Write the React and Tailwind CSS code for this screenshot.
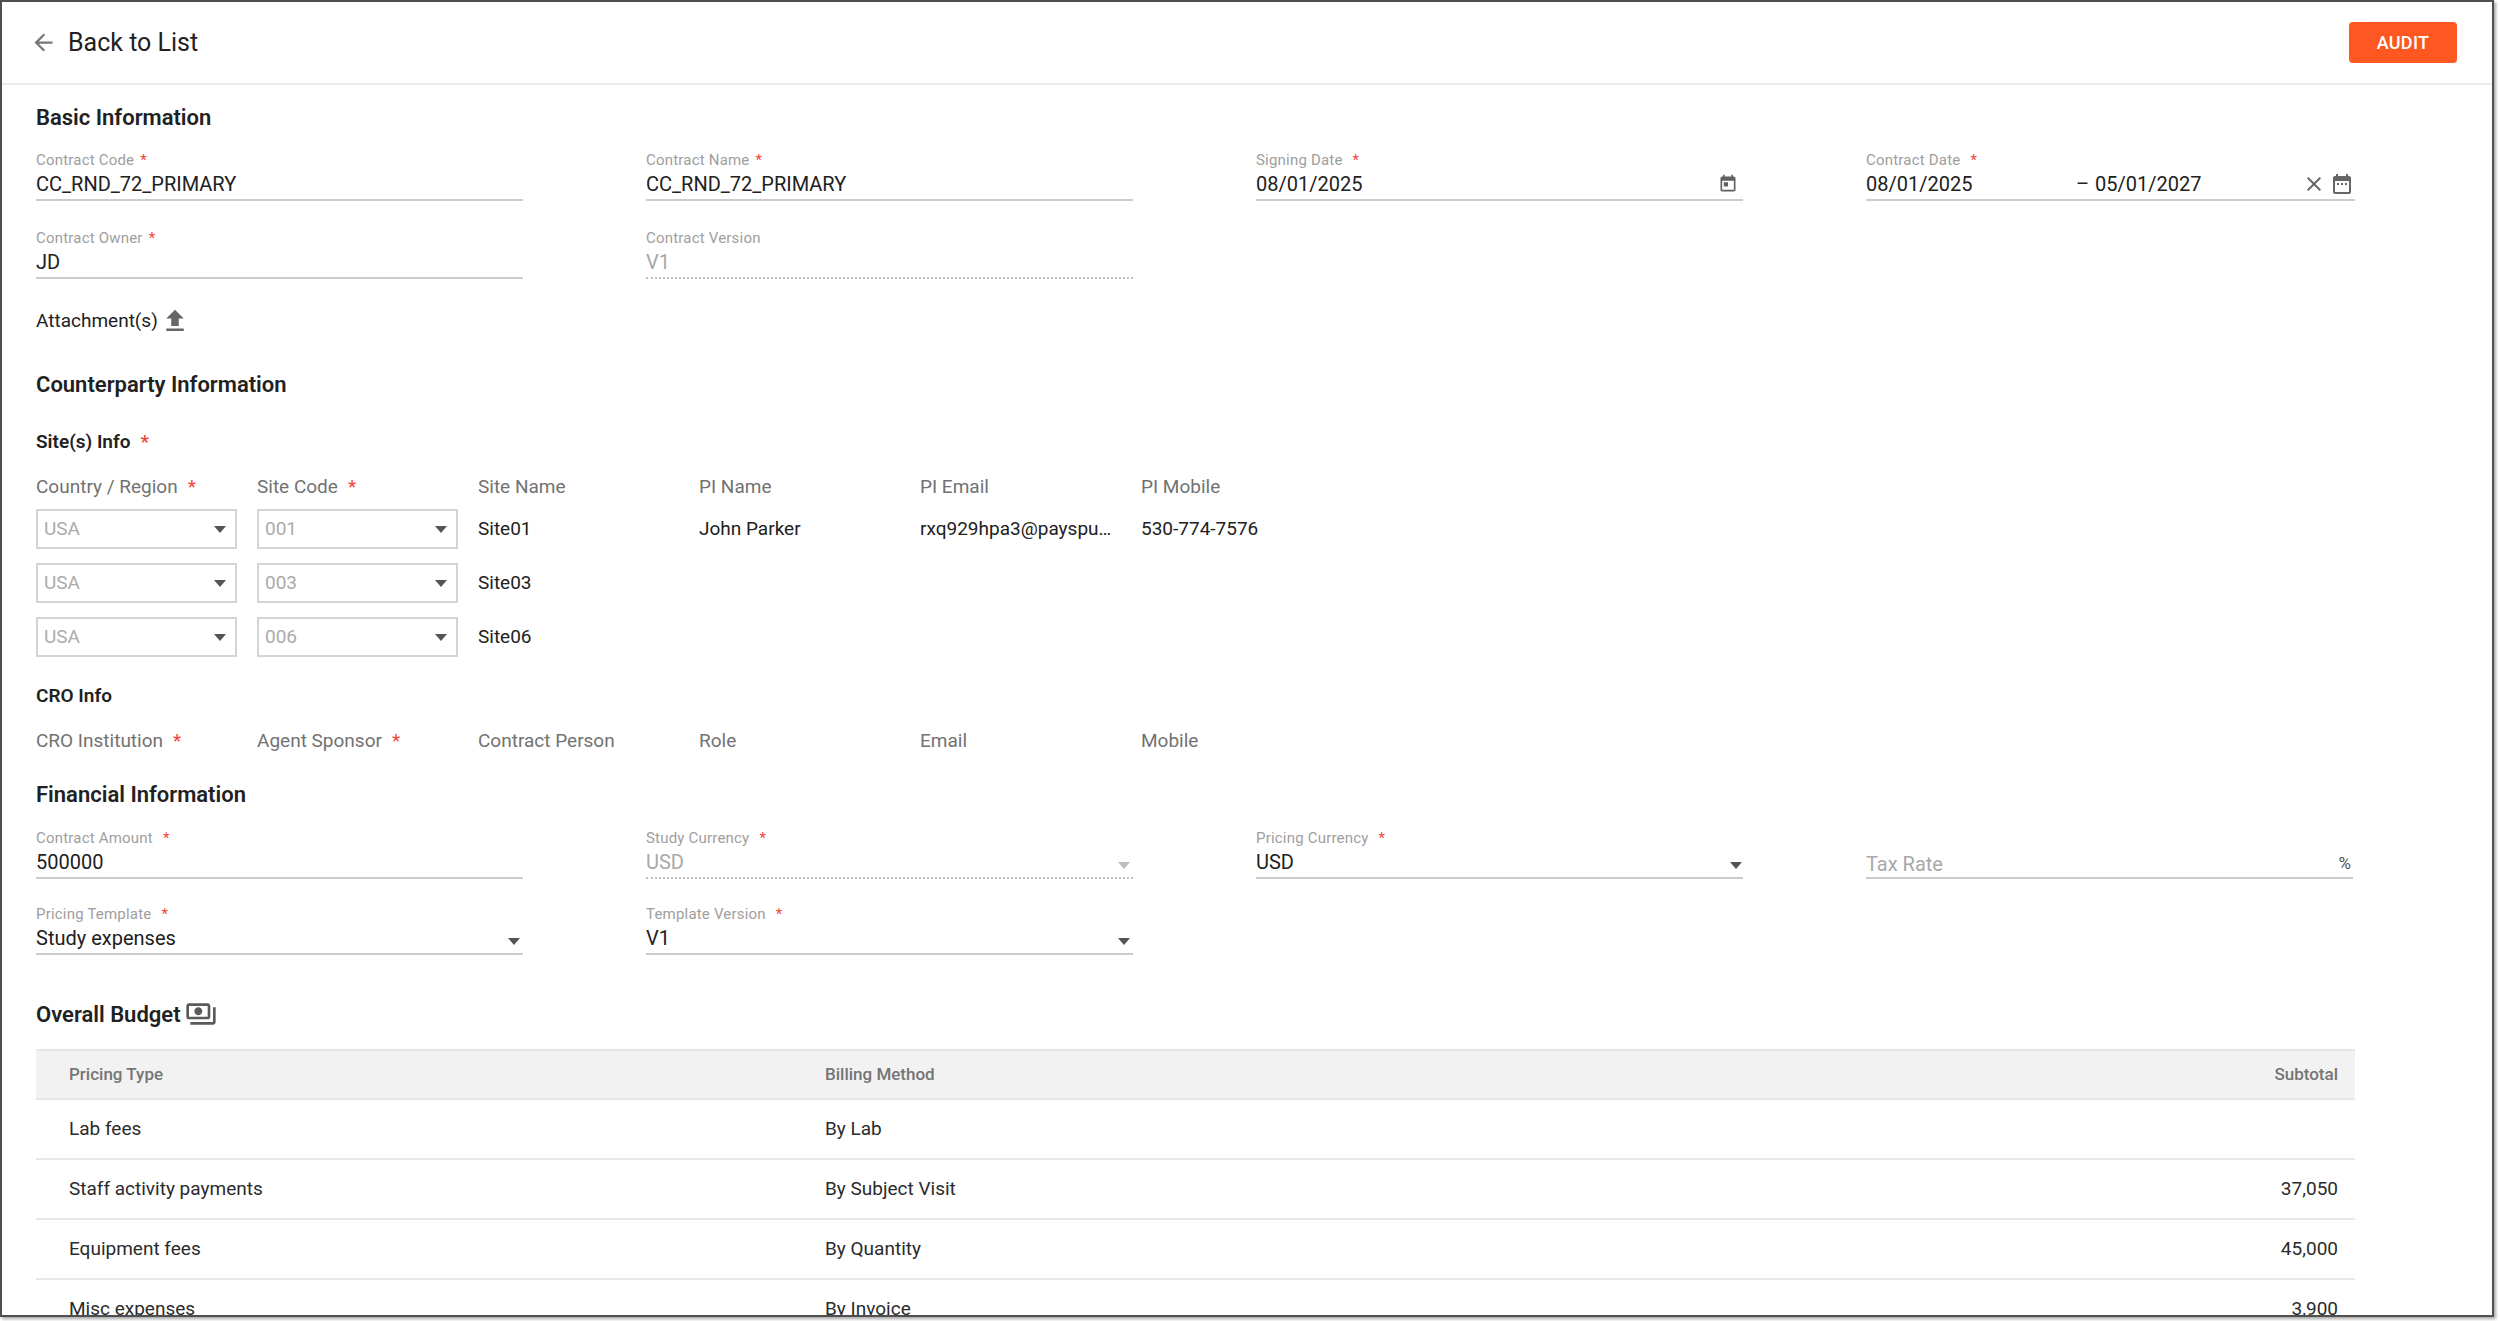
import React from "react";

const Star = ({ gap = "ml-[6px]" }) => (
  <span className={"text-[#f44336] " + gap}>*</span>
);

function ArrowDrop({ color = "border-t-[#555555]" }) {
  return (
    <span
      className={
        "inline-block w-0 h-0 border-l-[6px] border-r-[6px] border-t-[7px] border-l-transparent border-r-transparent " +
        color
      }
    />
  );
}

function Field({ label, star, starGap, value, disabled, placeholder, right }) {
  return (
    <div className="w-[487px]">
      <div className="h-[20px] leading-[20px] text-[15px] text-[#9e9e9e] tracking-[0.2px] whitespace-nowrap">
        {label}
        {star && <Star gap={starGap || "ml-[6px]"} />}
      </div>
      <div
        className={
          "h-[28px] flex items-center text-[20px] " +
          (placeholder ? "pt-[3px] " : "") +
          (disabled || placeholder ? "text-[#a8a8a8]" : "text-[#212121]")
        }
      >
        <span className="flex-1 whitespace-nowrap">{value}</span>
        {right}
      </div>
      <div
        className={
          "mt-[1px] border-b-2 " +
          (disabled ? "border-dotted border-[#bdbdbd]" : "border-solid border-[#cccccc]")
        }
      />
    </div>
  );
}

function TodayIcon() {
  return (
    <svg width="20" height="20" viewBox="0 0 24 24" fill="#616161" className="mr-[5px]">
      <path d="M19 3h-1V1h-2v2H8V1H6v2H5c-1.11 0-2 .9-2 2v14c0 1.1.89 2 2 2h14c1.1 0 2-.9 2-2V5c0-1.1-.9-2-2-2zm0 16H5V8h14v11zM7 10h5v5H7z" />
    </svg>
  );
}

function SelectBox({ value }) {
  return (
    <div className="w-[201px] h-[40px] border-2 border-[#d4d4d4] flex items-center pl-[6px] pr-[9px]">
      <span className="flex-1 text-[19px] text-[#ababab]">{value}</span>
      <ArrowDrop />
    </div>
  );
}

const siteRows = [
  { code: "001", name: "Site01", pi: "John Parker", email: "rxq929hpa3@payspu…", mobile: "530-774-7576" },
  { code: "003", name: "Site03", pi: "", email: "", mobile: "" },
  { code: "006", name: "Site06", pi: "", email: "", mobile: "" },
];

const tableRows = [
  ["Lab fees", "By Lab", ""],
  ["Staff activity payments", "By Subject Visit", "37,050"],
  ["Equipment fees", "By Quantity", "45,000"],
  ["Misc expenses", "By Invoice", "3,900"],
];

export default function App() {
  return (
    <div
      className="w-[2500px] h-[1321px] bg-white overflow-hidden"
      style={{ fontFamily: "Roboto, 'Liberation Sans', Arial, sans-serif" }}
    >
      <div className="w-[2494px] h-[1317px] border-2 border-[#4f4f4f] shadow-[2px_2px_3px_rgba(0,0,0,0.35)] overflow-hidden bg-white">
        {/* Header */}
        <div className="h-[83px] border-b-2 border-[#ebebeb] flex items-center pl-[28px] pr-[35px]">
          <svg width="27" height="27" viewBox="0 0 24 24" fill="#777777">
            <path d="M20 11H7.83l5.59-5.59L12 4l-8 8 8 8 1.41-1.41L7.83 13H20v-2z" />
          </svg>
          <span className="ml-[11px] text-[25px] text-[#212121] leading-none">Back to List</span>
          <div className="flex-1" />
          <button className="w-[108px] h-[41px] rounded-[4px] bg-[#ff5722] text-white text-[18px] font-medium tracking-[0.3px]">
            AUDIT
          </button>
        </div>

        <div className="pl-[34px]">
          {/* Basic Information */}
          <div className="mt-[19px] h-[28px] leading-[28px] text-[22px] font-semibold text-[#212121]">
            Basic Information
          </div>
          <div className="mt-[18px] grid grid-cols-[610px_610px_610px_610px]">
            <Field label="Contract Code" star value="CC_RND_72_PRIMARY" />
            <Field label="Contract Name" star value="CC_RND_72_PRIMARY" />
            <Field label="Signing Date" star starGap="ml-[10px]" value="08/01/2025" right={<TodayIcon />} />
            <div className="w-[489px]">
              <div className="h-[20px] leading-[20px] text-[15px] text-[#9e9e9e] tracking-[0.2px]">
                Contract Date
                <Star gap="ml-[10px]" />
              </div>
              <div className="h-[28px] flex items-center text-[20px] text-[#212121]">
                <span className="w-[210px]">08/01/2025</span>
                <span className="w-[19px]">–</span>
                <span className="flex-1">05/01/2027</span>
                <svg width="24" height="24" viewBox="0 0 24 24" fill="#666666" className="mr-[4px]">
                  <path d="M19 6.41L17.59 5 12 10.59 6.41 5 5 6.41 10.59 12 5 17.59 6.41 19 12 13.41 17.59 19 19 17.59 13.41 12z" />
                </svg>
                <svg width="24" height="24" viewBox="0 0 24 24" fill="#666666" className="mr-[1px]">
                  <path d="M9 11H7v2h2v-2zm4 0h-2v2h2v-2zm4 0h-2v2h2v-2zm2-7h-1V2h-2v2H8V2H6v2H5c-1.11 0-1.99.9-1.99 2L3 20c0 1.1.89 2 2 2h14c1.1 0 2-.9 2-2V6c0-1.1-.9-2-2-2zm0 16H5V9h14v11z" />
                </svg>
              </div>
              <div className="mt-[1px] border-b-2 border-[#cccccc]" />
            </div>
          </div>
          <div className="mt-[27px] grid grid-cols-[610px_610px_610px_610px]">
            <Field label="Contract Owner" star value="JD" />
            <Field label="Contract Version" value="V1" disabled />
          </div>

          <div className="mt-[28px] h-[28px] flex items-center text-[19px] text-[#212121]">
            <span>Attachment(s)</span>
            <svg width="30" height="30" viewBox="0 0 24 24" fill="#666666" className="ml-[2px]">
              <path d="M5 20h14v-2H5v2zm0-10h4v6h6v-6h4l-7-7-7 7z" />
            </svg>
          </div>

          {/* Counterparty */}
          <div className="mt-[36px] h-[28px] leading-[28px] text-[22px] font-semibold text-[#212121]">
            Counterparty Information
          </div>
          <div className="mt-[29px] h-[28px] leading-[28px] text-[19px] font-semibold text-[#212121]">
            Site(s) Info
            <Star gap="ml-[10px]" />
          </div>
          <div className="mt-[19px] h-[24px] grid grid-cols-[221px_221px_221px_221px_221px_221px] text-[19px] text-[#727272] leading-[24px]">
            <div>
              Country / Region
              <Star gap="ml-[10px]" />
            </div>
            <div>
              Site Code
              <Star gap="ml-[10px]" />
            </div>
            <div>Site Name</div>
            <div>PI Name</div>
            <div>PI Email</div>
            <div>PI Mobile</div>
          </div>
          <div className="mt-[10px] flex flex-col gap-[14px]">
            {siteRows.map((r) => (
              <div
                key={r.code}
                className="h-[40px] grid grid-cols-[221px_221px_221px_221px_221px_221px] items-center text-[19px] text-[#212121]"
              >
                <SelectBox value="USA" />
                <SelectBox value={r.code} />
                <div>{r.name}</div>
                <div>{r.pi}</div>
                <div className="whitespace-nowrap">{r.email}</div>
                <div>{r.mobile}</div>
              </div>
            ))}
          </div>

          {/* CRO */}
          <div className="mt-[25px] h-[28px] leading-[28px] text-[19px] font-semibold text-[#212121]">
            CRO Info
          </div>
          <div className="mt-[19px] h-[24px] grid grid-cols-[221px_221px_221px_221px_221px_221px] text-[19px] text-[#727272] leading-[24px]">
            <div>
              CRO Institution
              <Star gap="ml-[10px]" />
            </div>
            <div>
              Agent Sponsor
              <Star gap="ml-[10px]" />
            </div>
            <div>Contract Person</div>
            <div>Role</div>
            <div>Email</div>
            <div>Mobile</div>
          </div>

          {/* Financial */}
          <div className="mt-[28px] h-[28px] leading-[28px] text-[22px] font-semibold text-[#212121]">
            Financial Information
          </div>
          <div className="mt-[19px] grid grid-cols-[610px_610px_610px_610px]">
            <Field label="Contract Amount" star starGap="ml-[10px]" value="500000" />
            <Field
              label="Study Currency"
              star
              starGap="ml-[10px]"
              value="USD"
              disabled
              right={
                <span className="mr-[3px]">
                  <ArrowDrop color="border-t-[#bdbdbd]" />
                </span>
              }
            />
            <Field
              label="Pricing Currency"
              star
              starGap="ml-[10px]"
              value="USD"
              right={
                <span className="mr-[1px]">
                  <ArrowDrop />
                </span>
              }
            />
            <Field
              label=""
              value="Tax Rate"
              placeholder
              right={<span className="text-[17px] text-[#555555] mr-[2px]">%</span>}
            />
          </div>
          <div className="mt-[25px] grid grid-cols-[610px_610px_610px_610px]">
            <Field
              label="Pricing Template"
              star
              starGap="ml-[10px]"
              value="Study expenses"
              right={
                <span className="mr-[3px]">
                  <ArrowDrop />
                </span>
              }
            />
            <Field
              label="Template Version"
              star
              starGap="ml-[10px]"
              value="V1"
              right={
                <span className="mr-[3px]">
                  <ArrowDrop />
                </span>
              }
            />
          </div>

          <div className="mt-[45px] h-[28px] flex items-center text-[22px] font-semibold text-[#212121]">
            <span>Overall Budget</span>
            <svg width="32" height="32" viewBox="0 0 24 24" fill="#5a5a5a" className="ml-[4px]">
              <path d="M19 14V6c0-1.1-.9-2-2-2H3c-1.1 0-2 .9-2 2v8c0 1.1.9 2 2 2h14c1.1 0 2-.9 2-2zm-2 0H3V6h14v8zm-7-7c-1.66 0-3 1.34-3 3s1.34 3 3 3 3-1.34 3-3-1.34-3-3-3zm13 0v11c0 1.1-.9 2-2 2H4v-2h17V7h2z" />
            </svg>
          </div>

          {/* Table */}
          <div className="mt-[21px] w-[2319px]">
            <div className="h-[51px] bg-[#f2f2f2] border-t-2 border-b-2 border-[#e6e6e6] flex items-center text-[17px] font-medium text-[#757575]">
              <div className="w-[789px] pl-[33px]">Pricing Type</div>
              <div className="flex-1">Billing Method</div>
              <div className="pr-[17px]">Subtotal</div>
            </div>
            {tableRows.map((r) => (
              <div
                key={r[0]}
                className="h-[60px] border-b-2 border-[#e8e8e8] flex items-center text-[19px] text-[#2b2b2b]"
              >
                <div className="w-[789px] pl-[33px]">{r[0]}</div>
                <div className="flex-1">{r[1]}</div>
                <div className="pr-[17px]">{r[2]}</div>
              </div>
            ))}
          </div>
        </div>
      </div>
    </div>
  );
}
